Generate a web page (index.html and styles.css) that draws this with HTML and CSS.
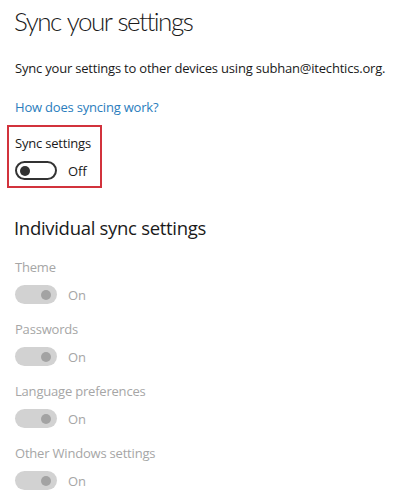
FILE: index.html
```html
<!DOCTYPE html>
<html>
<head>
<meta charset="utf-8">
<link rel="stylesheet" href="styles.css">
</head>
<body>
<main class="page">
  <h1 class="title">Sync your settings</h1>
  <p class="desc">Sync your settings to other devices using subhan@itechtics.org.</p>
  <a class="link" href="#">How does syncing work?</a>
  <div class="highlight">
    <div class="label">Sync settings</div>
    <div class="toggle-row">
      <span class="toggle off"><span class="knob"></span></span>
      <span class="state">Off</span>
    </div>
  </div>
  <h2 class="subtitle">Individual sync settings</h2>
  <div class="item">
    <div class="label dim">Theme</div>
    <div class="toggle-row">
      <span class="toggle disabled"><span class="knob"></span></span>
      <span class="state dim">On</span>
    </div>
  </div>
  <div class="item">
    <div class="label dim">Passwords</div>
    <div class="toggle-row">
      <span class="toggle disabled"><span class="knob"></span></span>
      <span class="state dim">On</span>
    </div>
  </div>
  <div class="item">
    <div class="label dim">Language preferences</div>
    <div class="toggle-row">
      <span class="toggle disabled"><span class="knob"></span></span>
      <span class="state dim">On</span>
    </div>
  </div>
  <div class="item">
    <div class="label dim">Other Windows settings</div>
    <div class="toggle-row">
      <span class="toggle disabled"><span class="knob"></span></span>
      <span class="state dim">On</span>
    </div>
  </div>
</main>
</body>
</html>
```

FILE: styles.css
```css
* { box-sizing: border-box; }
html, body { margin: 0; padding: 0; background: #fff; }
body {
  font-family: "Open Sans", "Noto Sans", "DejaVu Sans", sans-serif;
  color: #1a1a1a;
  width: 398px;
  height: 500px;
  overflow: hidden;
}
.page {
  padding: 2px 0 0 15px;
  display: flex;
  flex-direction: column;
  align-items: flex-start;
}
.title {
  margin: 0 0 0 -1px;
  font-family: Lato, "Open Sans", sans-serif;
  font-size: 26px;
  font-weight: 300;
  line-height: 38px;
  letter-spacing: -1.5px;
  word-spacing: 1px;
  color: #1a1a1a;
}
.desc {
  margin: 19px 0 0;
  font-size: 13px;
  line-height: 18px;
  letter-spacing: -0.2px;
  color: #1a1a1a;
}
.link {
  margin-top: 21px;
  font-size: 13px;
  line-height: 18px;
  letter-spacing: -0.2px;
  color: #2a7dbd;
  text-decoration: none;
}
.highlight {
  margin: 9px 0 0 -8px;
  width: 95px;
  height: 63px;
  border: 2px solid #d2323c;
  padding: 7px 0 0 6px;
}
.label {
  font-size: 13px;
  line-height: 18px;
  letter-spacing: -0.2px;
}
.dim { color: #a6a6a6; }
.toggle-row {
  display: flex;
  align-items: center;
  gap: 11px;
  margin-top: 9px;
}
.toggle {
  width: 42px;
  height: 19px;
  border-radius: 10px;
  display: flex;
  align-items: center;
}
.toggle.off {
  border: 2px solid #333;
  padding-left: 3px;
}
.toggle.off .knob { background: #333; }
.toggle.disabled {
  background: #d2d2d2;
  justify-content: flex-end;
  padding-right: 6px;
}
.toggle.disabled .knob { background: #a3a3a3; }
.knob {
  width: 10px;
  height: 10px;
  border-radius: 50%;
}
.state {
  font-size: 13px;
  line-height: 18px;
  color: #1a1a1a;
}
.state.dim { color: #a6a6a6; }
.subtitle {
  margin: 27px 0 0 -1px;
  font-size: 18.5px;
  font-weight: 400;
  line-height: 26px;
  letter-spacing: -0.3px;
  color: #1a1a1a;
}
.item { margin-top: 17px; }
.item + .item { margin-top: 16px; }
```
